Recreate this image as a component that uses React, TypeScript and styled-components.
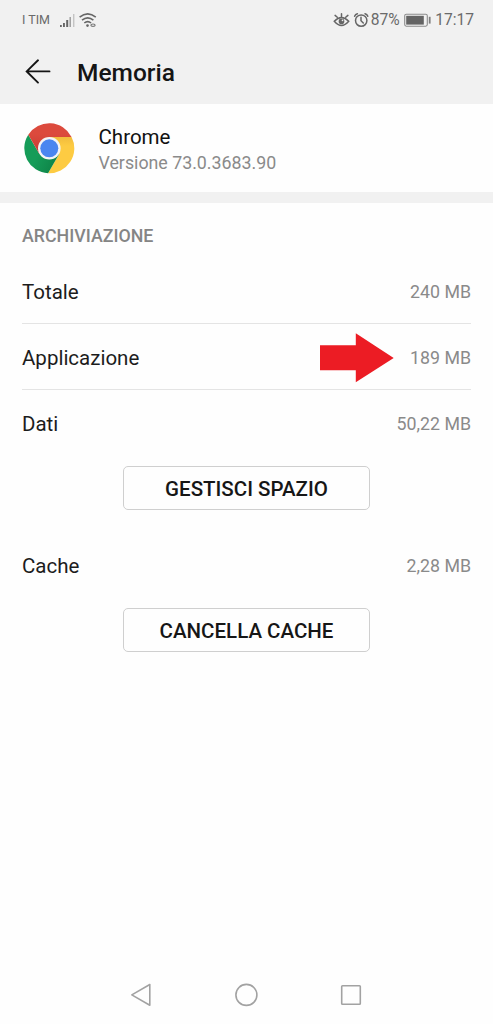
import React from 'react';
import styled, { createGlobalStyle } from 'styled-components';

const GlobalStyle = createGlobalStyle`
  * { box-sizing: border-box; }
  body { margin: 0; background: #fefefe; font-family: Roboto, "Liberation Sans", sans-serif; }
`;

const Screen = styled.div`
  width: 493px;
  height: 1024px;
  display: flex;
  flex-direction: column;
  background: #fefefe;
  overflow: hidden;
`;

const StatusBar = styled.div`
  height: 40px;
  flex: none;
  display: flex;
  justify-content: space-between;
  padding: 0 19px 0 22px;
  background: #f1f1f1;
  color: #6a6a6a;
`;

const StatusGroup = styled.div`
  display: flex;
  align-items: center;
  height: 40px;
`;

const StatusText = styled.span<{ $size: number; $ml?: number }>`
  font-size: ${(p) => p.$size}px;
  line-height: 40px;
  margin-left: ${(p) => p.$ml ?? 0}px;
  white-space: nowrap;
`;

const Icon = styled.svg<{ $ml?: number }>`
  display: block;
  flex: none;
  margin-left: ${(p) => p.$ml ?? 0}px;
`;

const Header = styled.header`
  height: 64px;
  flex: none;
  display: flex;
  align-items: center;
  padding-left: 24px;
  background: #f1f1f1;
`;

const Title = styled.h1`
  margin: 2px 0 0 25px;
  font-size: 24.5px;
  line-height: 30px;
  font-weight: 500;
  color: #151515;
`;

const AppRow = styled.section`
  height: 99px;
  flex: none;
  display: flex;
  padding: 19px 0 0 24px;
  border-bottom: 11px solid #f1f1f1;
`;

const AppInfo = styled.div`
  margin-left: 23.5px;
`;

const AppName = styled.div`
  font-size: 20.5px;
  line-height: 28px;
  color: #111;
`;

const AppVersion = styled.div`
  font-size: 17.8px;
  line-height: 24px;
  color: #8a8a8a;
`;

const Storage = styled.main`
  flex: 1;
  padding: 0 22px;
`;

const SectionTitle = styled.h2`
  margin: 0;
  padding-top: 22px;
  height: 55px;
  font-size: 17.8px;
  line-height: 22px;
  font-weight: 500;
  color: #858585;
`;

const Row = styled.div<{ $h: number; $top?: number; $bottom?: number; $line?: boolean }>`
  height: ${(p) => p.$h}px;
  padding: ${(p) => p.$top ?? 0}px 0 ${(p) => p.$bottom ?? 0}px;
  display: flex;
  align-items: center;
  border-bottom: ${(p) => (p.$line ? '1px solid #e4e4e4' : 'none')};
`;

const Label = styled.span`
  flex: 1;
  font-size: 20.5px;
  line-height: 24px;
  color: #1c1c1c;
`;

const Value = styled.span`
  font-size: 17.8px;
  line-height: 24px;
  color: #8a8a8a;
`;

const Button = styled.button`
  display: block;
  width: 247px;
  height: 44px;
  margin: 0 auto 0 101px;
  padding: 1px 0 0;
  border: 1.5px solid #cfcfcf;
  border-radius: 5px;
  background: #fefefe;
  font-family: inherit;
  font-size: 20.5px;
  font-weight: 500;
  color: #161616;
`;

const NavBar = styled.nav`
  height: 60px;
  flex: none;
  display: flex;
  justify-content: space-between;
  align-items: center;
  padding: 2px 130px 0 129px;
`;

const SignalIcon = () => (
  <Icon $ml={9} width="17" height="16" viewBox="59 11 17 16">
    <g fill="#666">
      <rect x="60" y="24" width="1.8" height="2" />
      <rect x="63" y="22" width="1.9" height="4" />
      <rect x="66.2" y="19" width="2" height="7" />
      <rect x="69.5" y="16" width="1.4" height="10" fill="#999" />
      <rect x="73" y="13" width="1.4" height="13" fill="#c4c4c4" />
    </g>
  </Icon>
);

const WifiIcon = () => (
  <Icon $ml={2} width="20" height="16" viewBox="78 11 20 16">
    <g fill="none" stroke="#666" strokeWidth="1.6">
      <path d="M79.6 16.2Q87.7 9.6 95.8 16.2" />
      <path d="M82 19.2Q87.7 14.6 93.4 19.2" />
      <path d="M84.3 22Q87.7 19.2 91.1 22" />
    </g>
    <circle cx="87.5" cy="24.6" r="1.3" fill="#666" />
    <ellipse cx="93" cy="24.2" rx="2.1" ry="1.2" fill="none" stroke="#777" strokeWidth="1.2" />
  </Icon>
);

const EyeIcon = () => (
  <Icon width="17" height="16" viewBox="333.5 11 17 16">
    <g fill="none" stroke="#666" strokeWidth="1.5" strokeLinecap="round">
      <path d="M334.8 20.2Q342 12.6 349.2 20.2Q342 28.6 334.8 20.2Z" />
      <path d="M342 15.5V12.8M337.8 16.3L335.6 14.4M346.2 16.3L348.4 14.4" />
    </g>
    <circle cx="342" cy="20.4" r="2.8" fill="#666" />
    <circle cx="343" cy="19.4" r="0.8" fill="#eee" />
  </Icon>
);

const AlarmIcon = () => (
  <Icon $ml={3.5} width="17" height="16" viewBox="354 11 17 16">
    <g fill="none" stroke="#666" strokeWidth="1.5" strokeLinecap="round">
      <circle cx="362.2" cy="19.6" r="5.7" />
      <path d="M362 16.2V19.8L364.3 22" />
      <path d="M355.6 15.3Q356.3 13.4 358.4 12.8M368.8 15.3Q368.1 13.4 366 12.8" />
    </g>
  </Icon>
);

const BatteryIcon = () => (
  <Icon $ml={4} width="28" height="16" viewBox="404 11 28 16">
    <rect x="404.7" y="13.2" width="22.6" height="12" rx="1.6" fill="none" stroke="#8c8c8c" strokeWidth="1.1" />
    <rect x="406.2" y="14.8" width="17.6" height="8.8" fill="#646464" />
    <rect x="428.8" y="15.8" width="1.8" height="6.8" fill="#808080" />
  </Icon>
);

const BackArrow = () => (
  <Icon width="28" height="28" viewBox="24 58 28 28">
    <path
      d="M49.5 71.4H26.7M38 60.3L26.7 71.4L38 82.6"
      fill="none"
      stroke="#151515"
      strokeWidth="1.9"
      strokeLinecap="round"
      strokeLinejoin="miter"
    />
  </Icon>
);

const ChromeLogo = () => (
  <Icon width="51" height="51" viewBox="-25.3 -25.3 51 51">
    <defs>
      <linearGradient id="redShade" x1="0" y1="0" x2="0" y2="1">
        <stop offset="0.35" stopColor="#dc4a3d" />
        <stop offset="1" stopColor="#c53a30" />
      </linearGradient>
      <linearGradient id="greenShade" x1="0" y1="0" x2="1" y2="0.5">
        <stop offset="0.5" stopColor="#159c58" />
        <stop offset="1" stopColor="#0f8549" />
      </linearGradient>
      <linearGradient id="yellowShade" x1="0" y1="0" x2="0" y2="1">
        <stop offset="0" stopColor="#f1bb3c" />
        <stop offset="0.25" stopColor="#fdcb42" />
      </linearGradient>
    </defs>
    <path d="M0 -11.4H22.25A25 25 0 0 1 -1.25 24.97L9.87 5.7L0 0Z" fill="url(#yellowShade)" />
    <path d="M-21 -13.57A25 25 0 0 0 -1.25 24.97L9.87 5.7L0 0L-9.87 5.7Z" fill="url(#greenShade)" />
    <path d="M-21 -13.57A25 25 0 0 1 22.25 -11.4H0V0L-9.87 5.7Z" fill="url(#redShade)" />
    <circle r="11.3" fill="#f4f4f4" />
    <circle r="9" fill="#4a86f0" />
  </Icon>
);

const PointerArrow = () => (
  <Icon width="75" height="50" viewBox="319 333 75 50">
    <path d="M320 345.3H355.8V333.3L393.7 358L355.8 382.3V370.3H320Z" fill="#ec1c24" />
  </Icon>
);

const PointerSlot = styled.span`
  display: flex;
  margin-right: 16px;
`;

export default function App() {
  return (
    <>
      <GlobalStyle />
      <Screen>
        <StatusBar>
          <StatusGroup>
            <StatusText $size={12.5}>I TIM</StatusText>
            <SignalIcon />
            <WifiIcon />
          </StatusGroup>
          <StatusGroup>
            <EyeIcon />
            <AlarmIcon />
            <StatusText $size={15.6} $ml={0.5}>87%</StatusText>
            <BatteryIcon />
            <StatusText $size={15.6} $ml={3.5}>17:17</StatusText>
          </StatusGroup>
        </StatusBar>
        <Header>
          <BackArrow />
          <Title>Memoria</Title>
        </Header>
        <AppRow>
          <ChromeLogo />
          <AppInfo>
            <AppName>Chrome</AppName>
            <AppVersion>Versione 73.0.3683.90</AppVersion>
          </AppInfo>
        </AppRow>
        <Storage>
          <SectionTitle>ARCHIVIAZIONE</SectionTitle>
          <Row $h={66} $top={3} $line>
            <Label>Totale</Label>
            <Value>240 MB</Value>
          </Row>
          <Row $h={66} $top={3} $line>
            <Label>Applicazione</Label>
            <PointerSlot>
              <PointerArrow />
            </PointerSlot>
            <Value>189 MB</Value>
          </Row>
          <Row $h={76} $bottom={8}>
            <Label>Dati</Label>
            <Value>50,22 MB</Value>
          </Row>
          <Button>GESTISCI SPAZIO</Button>
          <Row $h={98} $top={14}>
            <Label>Cache</Label>
            <Value>2,28 MB</Value>
          </Row>
          <Button>CANCELLA CACHE</Button>
        </Storage>
        <NavBar>
          <Icon width="24" height="28" viewBox="129 981 24 28">
            <path d="M149.8 984.5V1005.3L131.8 994.9Z" fill="none" stroke="#a2a2a2" strokeWidth="1.6" strokeLinejoin="round" />
          </Icon>
          <Icon width="24" height="28" viewBox="234 981 24 28">
            <circle cx="246.4" cy="994.9" r="10.5" fill="none" stroke="#a2a2a2" strokeWidth="1.6" />
          </Icon>
          <Icon width="24" height="28" viewBox="339 981 24 28">
            <rect x="341.7" y="985.7" width="18.6" height="18.6" rx="0.8" fill="none" stroke="#a2a2a2" strokeWidth="1.6" />
          </Icon>
        </NavBar>
      </Screen>
    </>
  );
}
